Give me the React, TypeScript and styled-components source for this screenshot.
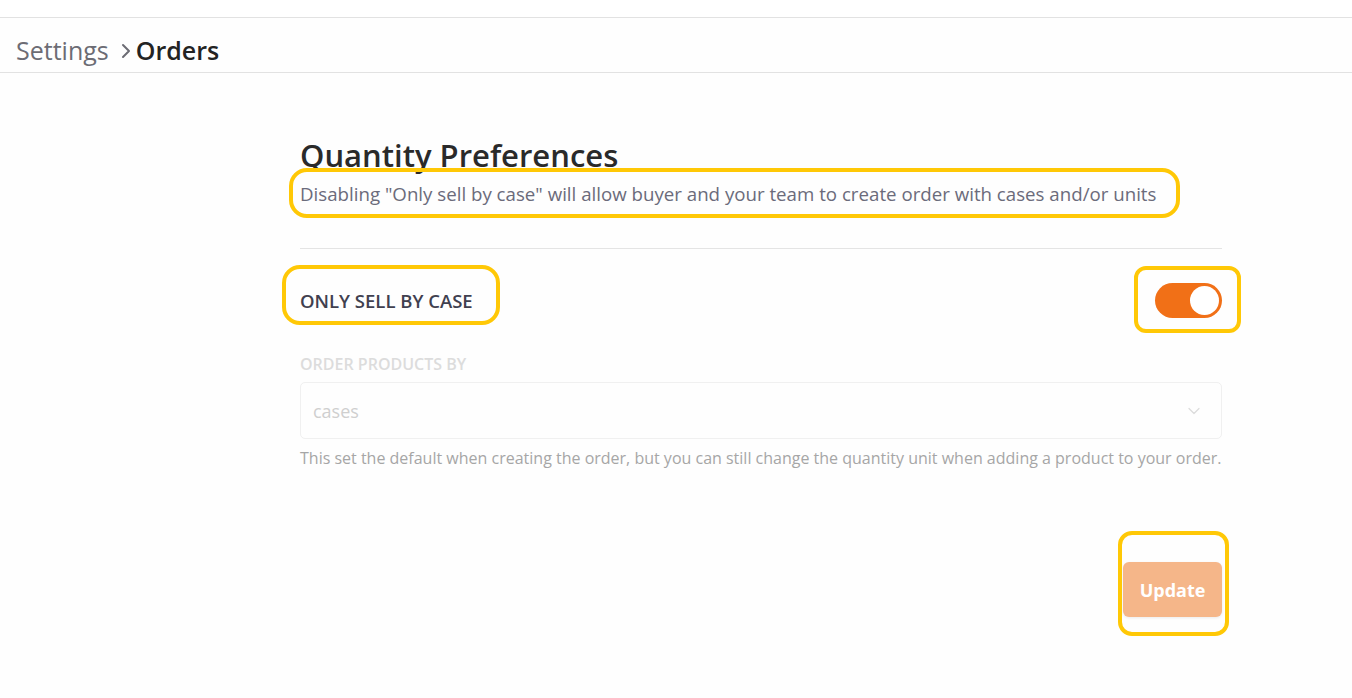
import { createGlobalStyle, styled } from "styled-components";
import { ChevronDown } from "lucide-react";

const GlobalStyle = createGlobalStyle`
  html, body {
    margin: 0;
    padding: 0;
    background: #fefefe;
    font-family: "Open Sans", "Noto Sans", sans-serif;
  }
`;

interface RingProps {
  $top: number;
  $right: number;
  $bottom: number;
  $left: number;
  $radius: number;
}

export default function App() {
  return (
    <>
      <GlobalStyle />
      <Page>
        <TopStrip />
        <Header>
          <Crumb>Settings</Crumb>
          <Separator viewBox="0 0 10 16" aria-hidden="true">
            <polyline points="2,2 8,8 2,14" />
          </Separator>
          <Current>Orders</Current>
        </Header>
        <Content>
          <Title>Quantity Preferences</Title>
          <Marked>
            <Description>
              Disabling "Only sell by case" will allow buyer and your team to create order with cases and/or units
            </Description>
            <Ring $top={-7} $right={-24} $bottom={-11} $left={-11} $radius={18} />
          </Marked>
          <Divider />
          <SettingRow>
            <Marked>
              <SettingLabel>ONLY SELL BY CASE</SettingLabel>
              <Ring $top={-24} $right={-27} $bottom={-12} $left={-18} $radius={18} />
            </Marked>
            <Marked>
              <Toggle role="switch" aria-checked="true" $on>
                <Knob />
              </Toggle>
              <Ring $top={-17} $right={-19} $bottom={-15} $left={-21} $radius={12} />
            </Marked>
          </SettingRow>
          <FieldLabel>ORDER PRODUCTS BY</FieldLabel>
          <Select>
            <span>cases</span>
            <ChevronDown size={20} strokeWidth={1.5} color="#dcdcdc" />
          </Select>
          <HelpText>
            This set the default when creating the order, but you can still change the quantity unit when adding a product to your order.
          </HelpText>
          <Actions>
            <Marked>
              <UpdateButton disabled>Update</UpdateButton>
              <Ring $top={-31} $right={-7} $bottom={-19} $left={-5} $radius={14} />
            </Marked>
          </Actions>
        </Content>
      </Page>
    </>
  );
}

const Page = styled.div`
  min-height: 100vh;
  background: #fefefe;
`;

const TopStrip = styled.div`
  height: 17px;
  background: #ffffff;
  border-bottom: 1px solid #e2e2e2;
`;

const Header = styled.div`
  height: 55px;
  box-sizing: border-box;
  display: flex;
  align-items: center;
  padding: 10px 16px 0;
  border-bottom: 1px solid #e2e2e2;
  font-size: 25px;
`;

const Crumb = styled.span`
  color: #6c6c74;
`;

const Separator = styled.svg`
  width: 10px;
  height: 16px;
  margin: 2px 5px 0 12px;
  fill: none;
  stroke: #6c6c74;
  stroke-width: 2;
  stroke-linecap: round;
  stroke-linejoin: round;
`;

const Current = styled.span`
  color: #232323;
  font-weight: 600;
`;

const Content = styled.main`
  width: 922px;
  margin-left: 300px;
  padding-top: 62px;
  display: flex;
  flex-direction: column;
`;

const Title = styled.h1`
  margin: 0;
  font-size: 31px;
  line-height: 40px;
  font-weight: 600;
  color: #2a2a2a;
`;

const Marked = styled.div`
  position: relative;
  width: fit-content;
`;

const Ring = styled.span<RingProps>`
  position: absolute;
  top: ${(p) => p.$top}px;
  right: ${(p) => p.$right}px;
  bottom: ${(p) => p.$bottom}px;
  left: ${(p) => p.$left}px;
  border: 4px solid #ffc806;
  border-radius: ${(p) => p.$radius}px;
  pointer-events: none;
`;

const Description = styled.p`
  margin: 6px 0 0;
  font-size: 18.7px;
  line-height: 26px;
  color: #6b6b7b;
  white-space: nowrap;
`;

const Divider = styled.hr`
  margin: 41px 0 0;
  border: 0;
  border-top: 1px solid #e4e4e4;
`;

const SettingRow = styled.div`
  display: flex;
  justify-content: space-between;
  align-items: center;
  margin-top: 34px;
`;

const SettingLabel = styled.span`
  display: block;
  font-size: 18.5px;
  line-height: 24px;
  font-weight: 600;
  color: #40404f;
`;

const Toggle = styled.button<{ $on?: boolean }>`
  display: flex;
  align-items: center;
  justify-content: ${(p) => (p.$on ? "flex-end" : "flex-start")};
  width: 67px;
  height: 35px;
  padding: 3px;
  border: 0;
  border-radius: 18px;
  background: ${(p) => (p.$on ? "#f17017" : "#d4d4d4")};
  cursor: pointer;
`;

const Knob = styled.span`
  width: 29px;
  height: 29px;
  border-radius: 50%;
  background: #ffffff;
`;

const FieldLabel = styled.label`
  margin-top: 35px;
  font-size: 16px;
  line-height: 22px;
  font-weight: 600;
  color: #dcdcdc;
`;

const Select = styled.div`
  margin-top: 7px;
  height: 57px;
  box-sizing: border-box;
  display: flex;
  align-items: center;
  justify-content: space-between;
  padding: 0 17px 0 12px;
  border: 1px solid #f0f0f0;
  border-radius: 5px;
  background: #fefefe;
  font-size: 18px;
  color: #cfcfcf;
`;

const HelpText = styled.p`
  margin: 7px 0 0;
  font-size: 16px;
  line-height: 24px;
  color: #a6a6a6;
  white-space: nowrap;
`;

const Actions = styled.div`
  display: flex;
  justify-content: flex-end;
  margin-top: 92px;
`;

const UpdateButton = styled.button`
  display: block;
  width: 99px;
  height: 55px;
  border: 0;
  border-radius: 6px;
  background: #f5b689;
  color: #ffffff;
  font-family: inherit;
  font-size: 18px;
  font-weight: 700;
  box-shadow: 0 1px 3px rgba(0, 0, 0, 0.08);
`;
